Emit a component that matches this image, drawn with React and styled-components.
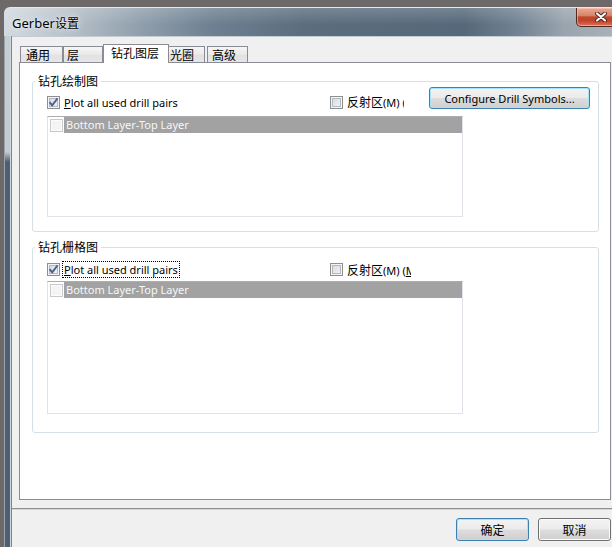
import React from "react";
import styled, { createGlobalStyle } from "styled-components";

const GlobalStyle = createGlobalStyle`
  html, body { margin: 0; padding: 0; }
  body {
    background: #6d6968;
    font-family: "Noto Sans", "Noto Sans CJK SC", sans-serif;
    font-size: 11px;
    color: #000;
  }
`;

const Screen = styled.div`
  width: 612px;
  height: 547px;
  overflow: hidden;
  box-sizing: border-box;
  padding: 7px 0 0 4px;
  background: #6d6968;
`;

const Window = styled.div`
  width: 608px;
  height: 540px;
  display: flex;
  flex-direction: column;
  overflow: hidden;
  border-top-left-radius: 6px;
  background: #5a6c7e;
`;

const TitleBar = styled.div`
  height: 29px;
  flex-shrink: 0;
  display: flex;
  align-items: flex-start;
  box-sizing: border-box;
  border-top: 1px solid #e4e8ec;
  background:
    linear-gradient(to bottom, rgba(255,255,255,.18), rgba(255,255,255,0) 60%),
    linear-gradient(to right, #d3dae0 0, #b9c3cb 60px, #8e9dab 140px, #6d7f90 210px, #5b6d7f 300px, #55697b 460px, #6f8090 510px, #99a4ad 560px, #a9b1b7 608px);
`;

const Title = styled.div`
  padding: 6px 0 0 8px;
  font-size: 13px;
  line-height: 17px;
  color: #000;
  text-shadow: 0 0 6px rgba(255,255,255,.9), 0 0 2px rgba(255,255,255,.7);
`;

const Zh = styled.span`
  font-family: "Noto Sans CJK SC", sans-serif;
  font-size: 12px;
`;

const CloseButton = styled.div`
  margin-left: auto;
  margin-right: -10px;
  width: 46px;
  height: 19px;
  flex-shrink: 0;
  box-sizing: border-box;
  border: 1px solid #4e2a22;
  border-top: none;
  border-radius: 0 0 5px 5px;
  box-shadow: inset 0 0 0 1px rgba(255,210,190,.55);
  background: linear-gradient(to bottom, #e9a995 0%, #d8846c 42%, #c1472c 50%, #c0432a 70%, #d9735a 100%);
  display: flex;
  align-items: center;
  padding-left: 18px;
`;

const Body = styled.div`
  flex: 1;
  display: flex;
  min-height: 0;
`;

const LeftEdge = styled.div`
  width: 8px;
  flex-shrink: 0;
  background: linear-gradient(to bottom, #c6ced5 0, #c2cad2 116px, #4d5f73 126px, #4d5f73 100%);
  box-shadow: inset 1px 0 #9aa2aa, inset -1px 0 #7b858f, inset -2px 0 #d2d9de;
`;

const Client = styled.div`
  flex: 1;
  display: flex;
  flex-direction: column;
  background: #f0f0f0;
  border-top: 1px solid #c4ccd3;
  padding-top: 7px;
`;

const TabRow = styled.div`
  height: 18px;
  display: flex;
  align-items: flex-end;
  padding-left: 8px;
`;

const Tab = styled.div`
  position: relative;
  box-sizing: border-box;
  width: ${p => p.$w}px;
  margin-left: ${p => p.$ml || 0}px;
  height: ${p => (p.$active ? 19 : 16)}px;
  margin-bottom: ${p => (p.$active ? -1 : 0)}px;
  padding-left: ${p => p.$pl}px;
  border: 1px solid #898c95;
  border-bottom: none;
  background: ${p => (p.$active ? "#fff" : "linear-gradient(to bottom, #f6f6f6, #e9e9e9 50%, #e1e1e1 51%, #e6e6e6)")};
  z-index: ${p => (p.$active ? 2 : 1)};
  font-family: "Noto Sans CJK SC", sans-serif;
  font-size: 12px;
  line-height: ${p => (p.$active ? 16 : 15)}px;
  white-space: nowrap;
`;

const Panel = styled.div`
  width: 592px;
  height: 438px;
  box-sizing: border-box;
  margin-left: 7px;
  border: 1px solid #898c95;
  background: #fff;
  padding: 11px 11px 0 12px;
  display: flex;
  flex-direction: column;
  gap: 8px;
`;

const Group = styled.fieldset`
  margin: 0;
  padding: 0;
  min-width: 0;
  border: 1px solid #d5dfe5;
  border-radius: 3px;
`;

const Legend = styled.legend`
  margin-left: 2px;
  padding: 0 3px;
  font-family: "Noto Sans CJK SC", sans-serif;
  font-size: 12px;
  line-height: 14px;
`;

const GroupBody = styled.div`
  padding: 0 8px ${p => p.$pb}px 14px;
`;

const Row = styled.div`
  display: flex;
  align-items: ${p => p.$align};
  height: ${p => p.$h}px;
  margin-top: ${p => p.$mt}px;
`;

const CheckItem = styled.div`
  display: flex;
  align-items: center;
  gap: 2px;
  width: ${p => (p.$w ? `${p.$w}px` : "auto")};
  margin-bottom: ${p => p.$mb || 0}px;
  flex-shrink: 0;
`;

const Box = styled.span`
  width: 13px;
  height: 13px;
  box-sizing: border-box;
  flex-shrink: 0;
  display: flex;
  align-items: center;
  justify-content: center;
  border: 1px solid ${p => (p.$soft ? "#c9c9c9" : "#8e8f8f")};
  background: ${p => (p.$soft ? "#f4f4f4" : "linear-gradient(135deg, #d3d7dc, #f7f7f7)")};
  box-shadow: ${p => (p.$soft ? "inset 0 0 0 1px #fbfbfb" : "inset 0 0 0 1px #f4f4f4, inset 0 0 0 2px #b4b9bf")};
`;

const Label = styled.span`
  display: block;
  box-sizing: border-box;
  padding: 0 1px;
  border: 1px ${p => (p.$focus ? "dotted #000" : "solid transparent")};
  line-height: 15px;
  white-space: nowrap;
  overflow: hidden;
  max-width: ${p => (p.$clip ? `${p.$clip}px` : "none")};
`;

const PushButton = styled.button`
  box-sizing: border-box;
  width: ${p => p.$w}px;
  height: ${p => p.$h}px;
  margin-left: ${p => (p.$push ? "auto" : "0")};
  padding: 0;
  border: 1px solid ${p => (p.$default ? "#3c7fb1" : "#707070")};
  border-radius: 3px;
  box-shadow: inset 0 0 0 1px ${p => (p.$default ? "#a6e4fc" : "#fbfbfb")};
  background: linear-gradient(to bottom, #f3f3f3 0%, #ebebeb 48%, #dddddd 52%, #cfcfcf 100%);
  font-family: "Noto Sans", "Noto Sans CJK SC", sans-serif;
  font-size: 11px;
  color: #000;
  line-height: 15px;
`;

const ListBox = styled.div`
  width: 416px;
  height: ${p => p.$h}px;
  margin-top: ${p => p.$mt}px;
  box-sizing: border-box;
  border: 1px solid #e2e3ea;
  border-top-color: #abadb3;
  background: #fff;
`;

const ListRow = styled.div`
  display: flex;
  align-items: center;
  height: 16px;
  padding-left: 2px;
`;

const RowText = styled.span`
  flex: 1;
  height: 16px;
  margin-left: 1px;
  padding-left: 2px;
  background: #a2a2a2;
  color: #f7f7f7;
  line-height: 16px;
  white-space: nowrap;
`;

const Footer = styled.div`
  margin-top: 8px;
  flex: 1;
  border-top: 1px solid #8f8f8f;
  box-shadow: inset 0 1px #d6d6d6;
  display: flex;
  justify-content: flex-end;
  align-items: flex-start;
  gap: 9px;
  padding: 9px 1px 0 0;
`;

function Check() {
  return (
    <svg width="11" height="11" viewBox="0 0 11 11">
      <path d="M1.6 5.2 L4.2 8.4 L9.6 1.2" fill="none" stroke="#4b5f96" strokeWidth="1.9" strokeLinejoin="round" />
    </svg>
  );
}

function CheckBox({ checked, soft }) {
  return <Box $soft={soft}>{checked && <Check />}</Box>;
}

function CloseGlyph() {
  return (
    <svg width="12" height="10" viewBox="0 0 12 10">
      <path d="M2 1.5 L10 8.5 M10 1.5 L2 8.5" stroke="#4a2018" strokeWidth="4" strokeLinecap="round" />
      <path d="M2 1.5 L10 8.5 M10 1.5 L2 8.5" stroke="#ffffff" strokeWidth="2.2" strokeLinecap="round" />
    </svg>
  );
}

const tabs = [
  { label: "通用", w: 43, pl: 5 },
  { label: "层", w: 40, pl: 3 },
  { label: "钻孔图层", w: 66, pl: 7, active: true },
  { label: "光圈", w: 37, pl: 1, ml: -1 },
  { label: "高级", w: 41, pl: 4, ml: 2 },
];

function DrillGroup({ title, focus, button, rowH, rowMt, align, itemMb, clip, listH, listMt, pb }) {
  return (
    <Group>
      <Legend>{title}</Legend>
      <GroupBody $pb={pb}>
        <Row $h={rowH} $mt={rowMt} $align={align}>
          <CheckItem $w={283} $mb={itemMb}>
            <CheckBox checked />
            <Label $focus={focus}><u>P</u>lot all used drill pairs</Label>
          </CheckItem>
          <CheckItem $mb={itemMb}>
            <CheckBox />
            <Label $clip={clip}><Zh>反射区</Zh>(M) (<u>M</u>)</Label>
          </CheckItem>
          {button && (
            <PushButton $w={161} $h={22} $push $default>Configure Drill Symbols...</PushButton>
          )}
        </Row>
        <ListBox $h={listH} $mt={listMt}>
          <ListRow>
            <CheckBox soft />
            <RowText>Bottom Layer-Top Layer</RowText>
          </ListRow>
        </ListBox>
      </GroupBody>
    </Group>
  );
}

export default function App() {
  return (
    <Screen>
      <GlobalStyle />
      <Window>
        <TitleBar>
          <Title>Gerber<Zh>设置</Zh></Title>
          <CloseButton><CloseGlyph /></CloseButton>
        </TitleBar>
        <Body>
          <LeftEdge />
          <Client>
            <TabRow>
              {tabs.map(t => (
                <Tab key={t.label} $w={t.w} $pl={t.pl} $ml={t.ml} $active={t.active}>{t.label}</Tab>
              ))}
            </TabRow>
            <Panel>
              <DrillGroup
                title="钻孔绘制图"
                button
                rowH={21}
                rowMt={0}
                align="flex-end"
                itemMb={-2}
                clip={60}
                listH={101}
                listMt={7}
                pb={14}
              />
              <DrillGroup
                title="钻孔栅格图"
                focus
                rowH={18}
                rowMt={7}
                align="center"
                itemMb={1}
                clip={67}
                listH={133}
                listMt={2}
                pb={18}
              />
            </Panel>
            <Footer>
              <PushButton $w={73} $h={23} $default><Zh>确定</Zh></PushButton>
              <PushButton $w={73} $h={23}><Zh>取消</Zh></PushButton>
            </Footer>
          </Client>
        </Body>
      </Window>
    </Screen>
  );
}
